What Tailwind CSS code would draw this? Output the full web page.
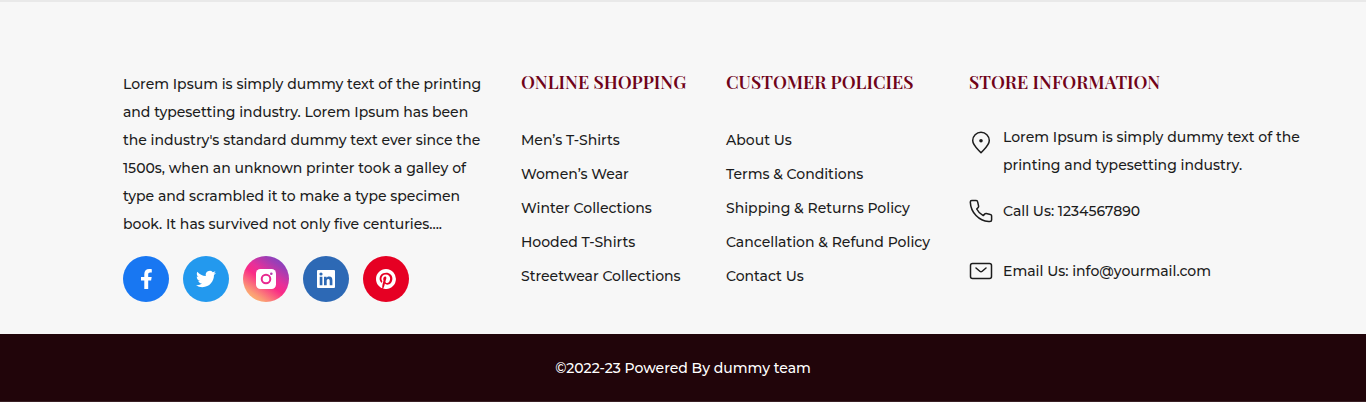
<!DOCTYPE html>
<html lang="en">
<head>
<meta charset="utf-8">
<meta name="viewport" content="width=device-width, initial-scale=1">
<title>Store footer</title>
<script src="https://cdn.jsdelivr.net/npm/@tailwindcss/browser@4"></script>
</head>
<body class="bg-[#f7f7f7]">
<footer class="border-t-2 border-[#e9e9e9] bg-[#f7f7f7] font-['Montserrat','Inter',sans-serif] text-sm font-medium text-[#1c1c1c]">
  <div class="grid grid-cols-[398fr_205fr_243fr_356fr] whitespace-nowrap pt-[66px] pr-[3%] pb-8 pl-[9%]">
    <section class="pt-0.5">
      <p class="leading-7">Lorem Ipsum is simply dummy text of the printing<br>and typesetting industry. Lorem Ipsum has been<br>the industry's standard dummy text ever since the<br>1500s, when an unknown printer took a galley of<br>type and scrambled it to make a type specimen<br>book. It has survived not only five centuries....</p>
      <div class="mt-[18px] flex gap-3.5">
        <a href="#" aria-label="Facebook" class="flex size-[46px] items-center justify-center rounded-full bg-[#1877f2]">
          <svg class="size-5" viewBox="0 0 20 20" fill="#fff"><path d="M8.3 20v-8.6H5V8h3.3V5.2C8.3 1.9 10.200 0 13.200 0c1.400 0 2.600.2 2.600.2v3.200h-1.500c-1.600 0-2.100.9-2.100 1.900V8h3.500l-.6 3.400h-2.900V20z"/></svg>
        </a>
        <a href="#" aria-label="Twitter" class="flex size-[46px] items-center justify-center rounded-full bg-[#2399ee]">
          <svg class="size-5" viewBox="0 0 24 24" fill="#fff"><path d="M23.950 4.570a10 10 0 0 1-2.820.780 4.960 4.960 0 0 0 2.160-2.730c-.95.560-2 .960-3.130 1.190a4.920 4.920 0 0 0-8.380 4.480C7.690 8.100 4.070 6.130 1.640 3.160a4.820 4.820 0 0 0-.67 2.480c0 1.710.87 3.210 2.190 4.100a4.900 4.900 0 0 1-2.230-.620v.060a4.920 4.920 0 0 0 3.950 4.830 5 5 0 0 1-2.210.080 4.940 4.940 0 0 0 4.600 3.420A9.870 9.870 0 0 1 0 19.540a14 14 0 0 0 7.560 2.210c9.050 0 14-7.500 14-13.980 0-.210 0-.420-.02-.630a10 10 0 0 0 2.460-2.550z"/></svg>
        </a>
        <a href="#" aria-label="Instagram" class="flex size-[46px] items-center justify-center rounded-full bg-[linear-gradient(35deg,#ffc66d_4%,#fb9d75_20%,#fa2b86_46%,#e7309a_58%,#a03db4_78%,#6a4acb_98%)]">
          <svg class="size-5" viewBox="0 0 20 20" fill="none"><rect width="20" height="20" rx="4.500" fill="#fff"/><circle cx="10" cy="10" r="4.300" stroke="#e8298f" stroke-width="2"/><circle cx="15.300" cy="4.700" r="1.300" fill="#b63bab"/></svg>
        </a>
        <a href="#" aria-label="LinkedIn" class="flex size-[46px] items-center justify-center rounded-full bg-[#2d69b5]">
          <svg class="size-[18px]" viewBox="0 0 18 18"><rect width="18" height="18" rx="1" fill="#fff"/><g fill="#2d69b5"><circle cx="4" cy="4" r="1.600"/><path d="M2.700 6.800h2.700v8.500H2.700zM7 6.800h2.600V8c.5-.9 1.400-1.400 2.600-1.400 2.500 0 3.200 1.600 3.200 4v4.700h-2.700v-4.200c0-1.200-.2-2.200-1.400-2.200-1.300 0-1.600 1-1.600 2.200v4.200H7z"/></g></svg>
        </a>
        <a href="#" aria-label="Pinterest" class="flex size-[46px] items-center justify-center rounded-full bg-[#e60023]">
          <svg class="size-5" viewBox="0 0 24 24" fill="#fff"><path d="M12 0C5.370 0 0 5.370 0 12c0 5.080 3.160 9.420 7.620 11.170-.1-.950-.2-2.400.04-3.440.22-.940 1.410-5.960 1.410-5.960s-.36-.720-.36-1.780c0-1.670.97-2.910 2.170-2.910 1.020 0 1.520.770 1.520 1.690 0 1.030-.66 2.570-1 4-.28 1.190.6 2.170 1.780 2.170 2.130 0 3.770-2.250 3.770-5.490 0-2.870-2.060-4.880-5.010-4.880-3.410 0-5.410 2.560-5.410 5.200 0 1.030.4 2.140.89 2.740.1.120.11.220.08.350l-.33 1.360c-.05.220-.17.270-.4.160-1.500-.7-2.430-2.880-2.430-4.650 0-3.780 2.750-7.250 7.920-7.250 4.160 0 7.400 2.970 7.400 6.930 0 4.140-2.610 7.460-6.230 7.460-1.210 0-2.350-.630-2.760-1.380l-.75 2.850c-.27 1.040-1 2.350-1.490 3.150A12 12 0 1 0 12 0z"/></svg>
        </a>
      </div>
    </section>
    <nav aria-labelledby="shop">
      <h2 id="shop" class="mb-[27px] font-['Playfair_Display','Liberation_Serif',serif] text-lg leading-7 font-semibold text-[#700319]">ONLINE SHOPPING</h2>
      <ul class="leading-[34px]">
        <li><a href="#">Men’s T-Shirts</a></li>
        <li><a href="#">Women’s Wear</a></li>
        <li><a href="#">Winter Collections</a></li>
        <li><a href="#">Hooded T-Shirts</a></li>
        <li><a href="#">Streetwear Collections</a></li>
      </ul>
    </nav>
    <nav aria-labelledby="policies">
      <h2 id="policies" class="mb-[27px] font-['Playfair_Display','Liberation_Serif',serif] text-lg leading-7 font-semibold text-[#700319]">CUSTOMER POLICIES</h2>
      <ul class="leading-[34px]">
        <li><a href="#">About Us</a></li>
        <li><a href="#">Terms &amp; Conditions</a></li>
        <li><a href="#">Shipping &amp; Returns Policy</a></li>
        <li><a href="#">Cancellation &amp; Refund Policy</a></li>
        <li><a href="#">Contact Us</a></li>
      </ul>
    </nav>
    <section>
      <h2 class="mb-[27px] font-['Playfair_Display','Liberation_Serif',serif] text-lg leading-7 font-semibold text-[#700319]">STORE INFORMATION</h2>
      <address class="leading-7 not-italic">
        <div class="flex gap-2.5">
          <svg class="mt-2 size-6 shrink-0" viewBox="0 0 24 24" fill="none" stroke="#1c1c1c" stroke-width="1.500" stroke-linejoin="round"><path d="M12 21.800C9 18.300 3.700 14.500 3.700 9.600a8.300 8.300 0 0 1 16.600 0c0 4.900-5.300 8.700-8.300 12.200z"/><circle cx="12" cy="9.800" r="1.800" fill="#1c1c1c" stroke="none"/></svg>
          <p>Lorem Ipsum is simply dummy text of the<br>printing and typesetting industry.</p>
        </div>
        <div class="mt-[18px] flex items-center gap-2.5">
          <svg class="size-6 shrink-0" viewBox="0 0 24 24" fill="none" stroke="#1c1c1c" stroke-width="1.500" stroke-linejoin="round"><path d="M7.200 1.500H2.800C1.900 1.500 1.300 2.200 1.300 3.100c.5 10.600 8.700 18.700 18.300 19.500h1.300c1 0 1.700-.6 1.700-1.500v-4.300c0-.7-.5-1.300-1.200-1.400l-4.200-.9c-.5-.1-1 .1-1.300.4l-1.700 1.700c-2.700-1.400-5.100-3.800-6.500-6.600l1.500-1.600c.4-.4.5-.8.4-1.300l-1-4.400c-.1-.7-.7-1.200-1.400-1.200z"/></svg>
          <a href="tel:1234567890">Call Us: 1234567890</a>
        </div>
        <div class="mt-8 flex items-center gap-2.5">
          <svg class="size-6 shrink-0" viewBox="0 0 24 24" fill="none" stroke="#1c1c1c" stroke-width="1.500" stroke-linecap="round" stroke-linejoin="round"><rect x="1.500" y="4.500" width="21" height="15" rx="2"/><path d="m7 9 3.800 3.200c.7.600 1.700.6 2.400 0L17 9"/></svg>
          <a href="mailto:info@yourmail.com">Email Us: info@yourmail.com</a>
        </div>
      </address>
    </section>
  </div>
  <div class="border-b border-[#3a2025] bg-[#21050a] pt-5 pb-[19px] text-center leading-7 text-white">©2022-23 Powered By dummy team</div>
</footer>
</body>
</html>
